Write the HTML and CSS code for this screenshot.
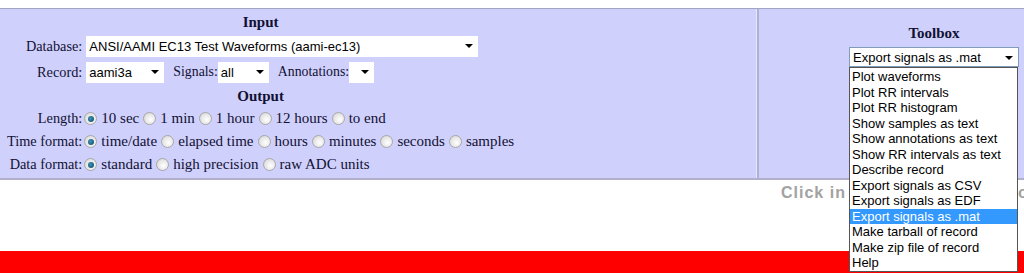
FILE: index.html
```html
<!DOCTYPE html>
<html>
<head>
<meta charset="utf-8">
<link rel="stylesheet" href="styles.css">
</head>
<body>
<div class="panel">
  <div class="left">
    <div class="form">
      <div class="head">Input</div>
      <div class="lbl">Database:</div>
      <div class="val">
        <div class="sel sel-db"><span>ANSI/AAMI EC13 Test Waveforms (aami-ec13)</span><i class="arrow"></i></div>
      </div>
      <div class="lbl">Record:</div>
      <div class="val">
        <div class="sel sel-rec"><span>aami3a</span><i class="arrow"></i></div>
        <span class="inl">Signals:</span>
        <div class="sel sel-sig"><span>all</span><i class="arrow"></i></div>
        <span class="inl">Annotations:</span>
        <div class="sel sel-ann"><span></span><i class="arrow"></i></div>
      </div>
      <div class="head">Output</div>
      <div class="lbl">Length:</div>
      <div class="val radios">
        <label class="opt"><i class="radio on"></i>10 sec</label>
        <label class="opt"><i class="radio"></i>1 min</label>
        <label class="opt"><i class="radio"></i>1 hour</label>
        <label class="opt"><i class="radio"></i>12 hours</label>
        <label class="opt"><i class="radio"></i>to end</label>
      </div>
      <div class="lbl">Time format:</div>
      <div class="val radios">
        <label class="opt"><i class="radio on"></i>time/date</label>
        <label class="opt"><i class="radio"></i>elapsed time</label>
        <label class="opt"><i class="radio"></i>hours</label>
        <label class="opt"><i class="radio"></i>minutes</label>
        <label class="opt"><i class="radio"></i>seconds</label>
        <label class="opt"><i class="radio"></i>samples</label>
      </div>
      <div class="lbl">Data format:</div>
      <div class="val radios">
        <label class="opt"><i class="radio on"></i>standard</label>
        <label class="opt"><i class="radio"></i>high precision</label>
        <label class="opt"><i class="radio"></i>raw ADC units</label>
      </div>
    </div>
  </div>
  <div class="right">
    <div class="toolbox">
      <div class="tb-head">Toolbox</div>
      <div class="sel sel-tb"><span>Export signals as .mat</span><i class="arrow"></i></div>
      <ul class="list">
        <li>Plot waveforms</li>
        <li>Plot RR intervals</li>
        <li>Plot RR histogram</li>
        <li>Show samples as text</li>
        <li>Show annotations as text</li>
        <li>Show RR intervals as text</li>
        <li>Describe record</li>
        <li>Export signals as CSV</li>
        <li>Export signals as EDF</li>
        <li class="hl">Export signals as .mat</li>
        <li>Make tarball of record</li>
        <li>Make zip file of record</li>
        <li>Help</li>
      </ul>
    </div>
  </div>
</div>
<div class="hint"><span>Click in the signal window to drag</span></div>
<div class="red"></div>
</body>
</html>
```

FILE: styles.css
```css
html, body {
  margin: 0;
  padding: 0;
  background: #ffffff;
  overflow: hidden;
}
body {
  padding-top: 8px;
  font-family: "Liberation Serif", "Times New Roman", serif;
  font-size: 15px;
  color: #111133;
}
.panel {
  display: flex;
  background: #d0d0fc;
  border-top: 1px solid #a4a4c4;
  border-bottom: 2px solid #b0b0cc;
  height: 169px;
}
.left {
  width: 757px;
  border-right: 1px solid #e6e6ff;
  padding: 2px 0 0 7px;
  box-sizing: border-box;
}
.form {
  display: inline-grid;
  grid-template-columns: auto auto;
  column-gap: 2px;
  grid-template-rows: 22px 26px 26px 22px 23px 23px 23px;
  align-items: center;
}
.head {
  grid-column: 1 / 3;
  text-align: center;
  font-weight: bold;
}
.lbl {
  text-align: right;
  white-space: nowrap;
  font-size: 14.3px;
}
.val {
  display: flex;
  align-items: center;
  white-space: nowrap;
}
.inl {
  font-size: 13.8px;
  margin: 0 0 0 9px;
}
.sel {
  position: relative;
  background: #ffffff;
  height: 21px;
  box-sizing: border-box;
  font-family: "Liberation Sans", Arial, sans-serif;
  font-size: 13px;
  color: #000;
  display: flex;
  align-items: center;
  padding-left: 3px;
}
.arrow {
  position: absolute;
  right: 5px;
  top: 8px;
  width: 0;
  height: 0;
  border-left: 4px solid transparent;
  border-right: 4px solid transparent;
  border-top: 4px solid #000;
}
.val > .sel-db, .val > .sel-rec { margin-left: 2px; }
.sel-db { width: 392px; }
.sel-rec { width: 78px; }
.sel-sig { width: 51px; }
.sel-ann { width: 25px; }
.radios {
  gap: 4px;
}
.opt {
  display: inline-flex;
  align-items: center;
}
.radio {
  width: 11px;
  height: 11px;
  border-radius: 50%;
  border: 1px solid #a8a8a8;
  background: radial-gradient(circle at 60% 60%, #ffffff 0, #e4e4e4 60%, #c8c8c8 100%);
  margin: 0 4px 0 0;
  display: inline-block;
  position: relative;
}
.radio.on::after {
  content: "";
  position: absolute;
  left: 2.5px;
  top: 2.5px;
  width: 6px;
  height: 6px;
  border-radius: 50%;
  background: radial-gradient(circle at 40% 40%, #3f95b8 0, #1b5a7c 70%);
}
.right {
  flex: 1;
  border-left: 2px solid #b0b0d0;
  display: flex;
  justify-content: flex-end;
  padding: 16px 5px 0 0;
}
.toolbox {
  position: relative;
  width: 170px;
}
.tb-head {
  text-align: center;
  font-weight: bold;
  height: 22px;
}
.sel-tb {
  width: 170px;
  height: 20px;
  border: 1px solid #7f9db9;
}
.list {
  position: absolute;
  left: 0;
  top: 42px;
  width: 169px;
  margin: 0;
  padding: 1px 0 0 0;
  list-style: none;
  background: #ffffff;
  border: 1px solid #555555;
  box-sizing: border-box;
  font-family: "Liberation Sans", Arial, sans-serif;
  font-size: 13px;
  color: #000;
  z-index: 5;
}
.list li {
  height: 15.5px;
  line-height: 15.5px;
  padding-left: 2px;
  white-space: nowrap;
}
.list li.hl {
  background: #3399ff;
  color: #ffffff;
}
.hint {
  height: 71px;
  padding: 2px 0 0 781px;
  box-sizing: border-box;
  white-space: nowrap;
  overflow: hidden;
}
.hint span {
  font-family: "Liberation Sans", Arial, sans-serif;
  font-weight: bold;
  font-size: 16px;
  letter-spacing: 1px;
  color: #a2a2a2;
  line-height: 22px;
}
.red {
  height: 30px;
  background: #ff0000;
}
```
